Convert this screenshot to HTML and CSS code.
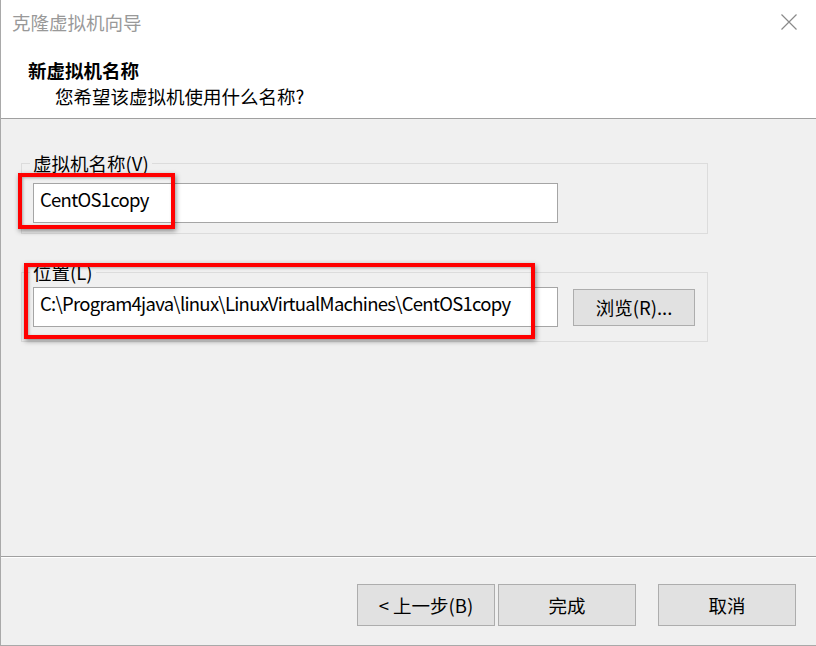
FILE: index.html
```html
<!DOCTYPE html>
<html lang="zh-CN">
<head>
<meta charset="utf-8">
<title>克隆虚拟机向导</title>
<link rel="stylesheet" href="styles.css">
</head>
<body>
<div class="window">
  <div class="titlebar">
    <span class="title">克隆虚拟机向导</span>
    <span class="close" aria-label="关闭">
      <svg width="18" height="18" viewBox="0 0 18 18"><path d="M1.5 1.5 L16.5 16.5 M16.5 1.5 L1.5 16.5" stroke="#8a8a8a" stroke-width="1.2" fill="none"/></svg>
    </span>
  </div>
  <div class="header">
    <div class="heading">新虚拟机名称</div>
    <div class="subheading">您希望该虚拟机使用什么名称?</div>
  </div>
  <div class="content">
    <fieldset class="group group-name">
      <legend>虚拟机名称(V)</legend>
      <div class="field-row">
        <div class="textbox">CentOS1copy</div>
      </div>
    </fieldset>
    <fieldset class="group group-location">
      <legend>位置(L)</legend>
      <div class="field-row">
        <div class="textbox">C:\Program4java\linux\LinuxVirtualMachines\CentOS1copy</div>
        <button class="btn btn-browse">浏览(R)...</button>
      </div>
    </fieldset>
  </div>
  <div class="footer">
    <button class="btn btn-nav">&lt; 上一步(B)</button>
    <button class="btn btn-nav">完成</button>
    <button class="btn btn-nav btn-cancel">取消</button>
  </div>
  <div class="mark mark-name"></div>
  <div class="mark mark-location"></div>
</div>
</body>
</html>
```
FILE: styles.css
```css
* { box-sizing: border-box; }
html, body { margin: 0; padding: 0; background: #f0f0f0; }
body {
  font-family: "Noto Sans CJK SC", "Noto Sans", sans-serif;
  font-size: 18.5px;
  color: #000;
}
.window {
  position: relative;
  width: 816px;
  height: 646px;
  display: flex;
  flex-direction: column;
  border-left: 1px solid #a9a9a9;
  border-bottom: 1px solid #a9a9a9;
  background: #f0f0f0;
}
.titlebar {
  height: 44px;
  background: #fff;
  display: flex;
  align-items: center;
  justify-content: space-between;
  padding: 0 10px 0 11px;
}
.title { color: #999; font-size: 18.5px; line-height: 44px; }
.close { display: flex; width: 18px; height: 18px; margin-right: 8px; }
.header {
  background: #fff;
  height: 75px;
  padding: 14px 0 0 27px;
  border-bottom: 1px solid #a0a0a0;
}
.heading { font-weight: bold; line-height: 24px; }
.subheading { line-height: 24px; padding-left: 27px; margin-top: 2px; }
.content {
  flex: 1;
  padding: 33px 0 0 20px;
}
.group {
  width: 687px;
  margin: 0;
  padding: 9px 12px 10px 11px;
  border: 1px solid #dcdcdc;
}
.group legend {
  padding: 0 3px;
  margin-left: -3px;
  line-height: 22px;
}
.group-location { margin-top: 27px; padding-top: 4px; padding-bottom: 14px; }
.field-row { display: flex; align-items: center; gap: 15px; }
.textbox {
  width: 525px;
  height: 40px;
  background: #fff;
  border: 1px solid #a5a5a5;
  padding: 0 6px;
  line-height: 31px;
  letter-spacing: -0.72px;
  white-space: nowrap;
  overflow: hidden;
}
.btn {
  font: inherit;
  color: #000;
  background: #e1e1e1;
  border: 1px solid #adadad;
  padding: 0;
  margin: 0;
}
.btn-browse { width: 122px; height: 37px; }
.footer {
  height: 89px;
  border-top: 1px solid #a0a0a0;
  box-shadow: inset 0 1px 0 #fff;
  display: flex;
  justify-content: flex-end;
  align-items: flex-start;
  gap: 3px;
  padding: 27px 20px 0 0;
}
.btn-nav { width: 138px; height: 42px; }
.btn-cancel { margin-left: 19px; }
.mark {
  position: absolute;
  border: 4px solid #ff0000;
  box-shadow: 1px 2px 5px rgba(0,0,0,0.45), inset 1px 1px 3px rgba(0,0,0,0.3);
  pointer-events: none;
}
.mark-name { left: 17px; top: 173px; width: 157px; height: 56px; }
.mark-location { left: 23px; top: 263px; width: 511px; height: 76px; }
```
